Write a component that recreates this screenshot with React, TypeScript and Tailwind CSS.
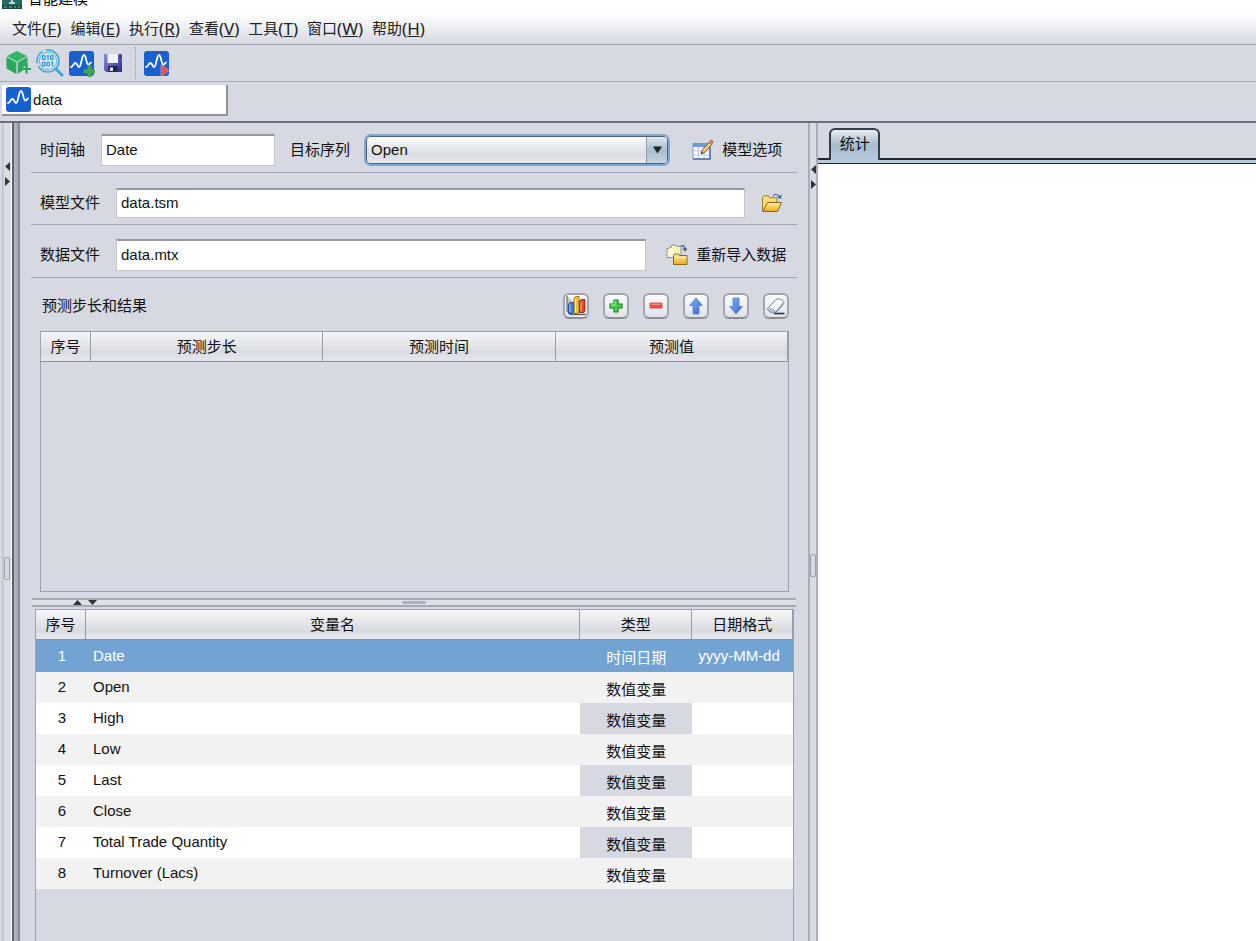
import { useState } from "react"

const menus = [
    { label: "文件", key: "F" },
    { label: "编辑", key: "E" },
    { label: "执行", key: "R" },
    { label: "查看", key: "V" },
    { label: "工具", key: "T" },
    { label: "窗口", key: "W" },
    { label: "帮助", key: "H" },
]

const variables = [
    { name: "Date", type: "时间日期", format: "yyyy-MM-dd" },
    { name: "Open", type: "数值变量", format: "" },
    { name: "High", type: "数值变量", format: "" },
    { name: "Low", type: "数值变量", format: "" },
    { name: "Last", type: "数值变量", format: "" },
    { name: "Close", type: "数值变量", format: "" },
    { name: "Total Trade Quantity", type: "数值变量", format: "" },
    { name: "Turnover (Lacs)", type: "数值变量", format: "" },
]

const Gradients = () => (
    <svg width="0" height="0" className="absolute" aria-hidden="true">
        <defs>
            <linearGradient id="folder" x1="0" y1="0" x2="0" y2="1">
                <stop offset="0" stopColor="#fff0a0" />
                <stop offset="1" stopColor="#eda820" />
            </linearGradient>
            <linearGradient id="blue" x1="0" y1="0" x2="1" y2="1">
                <stop offset="0" stopColor="#8fb4f5" />
                <stop offset="1" stopColor="#2d62d4" />
            </linearGradient>
            <linearGradient id="disk" x1="0" y1="0" x2="1" y2="1">
                <stop offset="0" stopColor="#8d8fe8" />
                <stop offset="1" stopColor="#2c2a86" />
            </linearGradient>
        </defs>
    </svg>
)

const AppIcon = () => (
    <svg width="20" height="22" viewBox="0 0 20 22">
        <rect width="20" height="22" fill="#236e63" />
        <rect y="18" width="20" height="4" fill="#174c46" />
        <path d="M10 8v8M7 16h6" stroke="#e8f5f2" strokeWidth="1.500" />
        <path d="M2 20h3M7 20h3M12 20h2M16 20h2" stroke="#8fbdb5" strokeWidth="1" />
    </svg>
)

const CubeIcon = () => (
    <svg width="26" height="26" viewBox="0 0 26 26">
        <path d="M11 1 21 6 11 11.500 1 6z" fill="#31b566" />
        <path d="M.5 7 10.300 12.500V24L.5 18.500z" fill="#29a65a" />
        <path d="M11.700 12.500 21.500 7v9.500h-4v3.500L11.700 24z" fill="#2cab5e" />
        <path d="M20.500 14.500v9M16 19h9" stroke="#2ba95c" strokeWidth="2.200" />
        <path d="M1 6.500 11 12 21.500 6.500M11 12v12" fill="none" stroke="#7fcfa0" strokeWidth=".8" />
    </svg>
)

const SearchDataIcon = () => (
    <svg width="28" height="28" viewBox="0 0 28 28">
        <circle cx="12" cy="12" r="11" fill="none" stroke="#38a7dc" strokeWidth="1.500" strokeDasharray="29 3 14 3" />
        <circle cx="12" cy="12" r="8.600" fill="#dbe6ef" stroke="#5db7e0" strokeWidth="1" />
        <path d="m20 20 6 6" stroke="#38a7dc" strokeWidth="3" strokeLinecap="round" />
        <g fill="none" stroke="#1f93cf" strokeWidth="1.200">
            <rect x="6.500" y="6.500" width="2.500" height="4" rx="1" />
            <path d="M11 7.200 12 6.500V11" />
            <rect x="14.500" y="6.500" width="2.500" height="4" rx="1" />
            <rect x="6.500" y="13" width="2.500" height="4" rx="1" />
            <rect x="11" y="13" width="2.500" height="4" rx="1" />
            <path d="M15.500 13.700 16.500 13v4.500" />
        </g>
    </svg>
)

const WaveIcon = ({ badge }: { badge?: "plus" | "play" }) => (
    <svg width="27" height="27" viewBox="0 0 27 27">
        <rect x="1" y="1" width="25" height="25" rx="3" fill="#1660d2" />
        <path
            d="M3 17c2 0 2.500-4 4.500-4 2 0 1.800 4 3.500 4C13.500 17 13.500 5 16 5c2.200 0 2.200 9.500 4.300 9.500 1.200 0 1.400-1.500 2.700-2"
            fill="none"
            stroke="#fff"
            strokeWidth="1.800"
            strokeLinecap="round"
        />
        {badge === "plus" && <path d="M19.500 15.500h4v4H27v3.500h-3.500V27h-4v-4h-4v-3.500h4z" fill="#43a84a" />}
        {badge === "play" && <path d="M18 14.500v12l8-6z" fill="#ee4b4b" stroke="#f7a0a0" strokeWidth=".6" />}
    </svg>
)

const SaveIcon = () => (
    <svg width="18" height="18" viewBox="0 0 18 18">
        <path d="M0 0h18v18H2l-2-2z" fill="url(#disk)" />
        <path d="M3.500 0h10.500v9H3.500z" fill="#f1f3fb" />
        <path d="M4.500 12h9v6h-9z" fill="#23234f" />
        <path d="M6 13.500h3V17H6z" fill="#e6e8f4" />
        <path d="M15.500 1.500h1.300V4h-1.300z" fill="#1c1b5c" />
    </svg>
)

const OptionsIcon = () => (
    <svg width="22" height="22" viewBox="0 0 22 22">
        <path d="M1 4.500h17V20H1z" fill="#fff" stroke="#6f94c8" />
        <path d="M1 4.500h17v3.500H1z" fill="#6f9ae2" />
        <path d="M1 12h17M1 16h17M6.500 8v12M12 8v12" stroke="#b4c9e8" />
        <path d="M18 8v12H1" fill="none" stroke="#496fae" strokeWidth="1.400" />
        <path d="m9 15 1.500-4.500L17.500 3l2.500 2.200-7 8z" fill="#f3cd6c" stroke="#6e5632" />
        <path d="m17 3.300 1.500-1.800c1-1 3.500 1 2.500 2.200L19.500 5.500z" fill="#e58265" stroke="#a65440" strokeWidth=".7" />
        <path d="m9 15 .7-2.200L11 14z" fill="#333" />
    </svg>
)

const OpenFolderIcon = () => (
    <svg width="22" height="20" viewBox="0 0 22 20">
        <path d="M1.500 18V4.500l1.300-1.800h4.500l1.500 2H16V18z" fill="#f3d981" stroke="#a17d28" />
        <path d="M2 18.500 6.500 9.500H20.500L16.500 18.500z" fill="url(#folder)" stroke="#8f6716" />
        <path d="M12 3c1.500-2.300 5-2.300 6.500 1" fill="none" stroke="#4f75a8" strokeWidth="1.400" />
        <path d="m20.500 1.500-.3 4.500-4-1.500z" fill="#3d659d" />
    </svg>
)

const ReimportIcon = () => (
    <svg width="22" height="22" viewBox="0 0 22 22">
        <path d="M1 13.500V4.500h2L4 3h4l1 1.500h4.500v9z" fill="#fff7d2" stroke="#83959f" />
        <path d="M5 4V2.500L6 1h4l1 1.500h4V12" fill="#fdf1bd" stroke="#83959f" />
        <path d="M15 2c2.500-1 4 .5 4 3" fill="none" stroke="#3f6698" strokeWidth="1.400" />
        <path d="m16.500 4.500 2.500 3 2.500-3z" fill="#34598d" />
        <path d="M7.500 20.500v-9l1-1.500h4l1 1.500h7.500v9z" fill="url(#folder)" stroke="#94661a" />
        <path d="M8 13.500h12.500" stroke="#fff3b0" />
    </svg>
)

const ChartIcon = () => (
    <svg width="22" height="22" viewBox="0 0 22 22">
        <path d="M2 1v15l3 3.500h16L18 16z" fill="#c4c6cc" />
        <path d="M2 1v15l3 3.500h16" fill="none" stroke="#57585e" />
        <path d="M3.500 9l1.500-1.500h4V17L7.500 18.500h-4z" fill="#3e7be4" stroke="#1b3f91" strokeWidth=".8" />
        <path d="M9 3l1.500-1.500h3.500V17l-1 1.500H9z" fill="#f0c040" stroke="#86600c" strokeWidth=".8" />
        <path d="M14.500 6 16 4.500h4V16l-1.500 1.500h-4z" fill="#e04a2c" stroke="#871d0d" strokeWidth=".8" />
        <path d="M5 9.500v7.500M10.500 4v13M16 7v9" stroke="#fff" strokeOpacity=".6" />
    </svg>
)

const PlusIcon = () => (
    <svg width="14" height="14" viewBox="0 0 14 14">
        <path d="M5 1h4v4h4v4H9v4H5V9H1V5h4z" fill="#4cd04c" stroke="#168a22" strokeWidth="1.200" />
        <path d="M6 2v4H2" fill="none" stroke="#a8f0a0" />
    </svg>
)

const MinusIcon = () => (
    <svg width="14" height="14" viewBox="0 0 14 14">
        <path d="M1 4h12v5H1z" fill="#ee5049" stroke="#c93a35" strokeWidth=".8" />
        <path d="M2 5.200h10" stroke="#f9a49c" />
    </svg>
)

const ArrowIcon = ({ down = false }: { down?: boolean }) => (
    <svg width="16" height="18" viewBox="0 0 16 18">
        <path
            d={down ? "M8 17 1.500 9.500H5V1h6v8.500h3.500z" : "M8 1 14.500 8.500H11V17H5V8.500H1.500z"}
            fill="url(#blue)"
            stroke="#5c82cc"
            strokeWidth=".8"
        />
    </svg>
)

const EraserIcon = () => (
    <svg width="20" height="18" viewBox="0 0 20 18">
        <path d="M8 16.500h10.500" stroke="#333" strokeWidth="1.600" />
        <path d="M1.500 11.500 10 2.500C11.500 1 18 2.500 18 5.500L10 15c-2 2-8.500 0-8.500-3.500z" fill="#f7f9fc" stroke="#6e7f98" />
        <path d="M2.500 12c1-1.500 7 0 6.500 3-2 1-6.500-.5-6.500-3z" fill="#b9c8de" stroke="#8798b2" strokeWidth=".7" />
        <path d="M17.500 6.500 10 15" stroke="#7f93b3" strokeWidth="1.600" />
    </svg>
)

const smallButtons = [
    { label: "图表", icon: <ChartIcon /> },
    { label: "添加", icon: <PlusIcon /> },
    { label: "删除", icon: <MinusIcon /> },
    { label: "上移", icon: <ArrowIcon /> },
    { label: "下移", icon: <ArrowIcon down /> },
    { label: "清除", icon: <EraserIcon /> },
]

const inputClass =
    "min-w-0 border border-[#c4c6cb] border-t-2 border-t-[#96989d] bg-white px-1 pb-[2px] text-[15px] outline-none"
const headCell =
    "h-[30px] border-r border-b border-r-[#9a9da6] border-b-[#8d9098] bg-linear-to-b from-[#f5f6f8] via-[#d9dbe1] via-70% to-[#e6e8f0] p-0 text-center font-normal"

const SplitArrows = () => (
    <svg width="7" height="26" viewBox="0 0 7 26">
        <path d="M6 1v9L1 5.500z" fill="#333" />
        <path d="M1 16v9l5-4.500z" fill="#333" />
    </svg>
)

// vertical divider handle with collapse arrows and grip
const Splitter = () => (
    <div className="flex w-full flex-col items-center border-x-2 border-[#a9adb8] bg-[#d9dce3] pt-[41px]">
        <SplitArrows />
        <div className="mt-[364px] h-[23px] w-[6px] rounded-xs border border-[#9da1ad] bg-[#d6d9e1]" />
    </div>
)

const FilesForm = () => {
    const [target, setTarget] = useState("Open")

    return (
        <div className="mx-[11px]">
            <div className="flex h-[50px] items-center border-b border-[#a2a6b0] pt-1 pr-[15px] pl-[9px]">
                <label htmlFor="axis">时间轴</label>
                <input id="axis" defaultValue="Date" className={inputClass + " ml-4 h-8 w-[174px]"} />
                <label htmlFor="target" className="ml-[15px]">目标序列</label>
                <div className="relative ml-4 h-7 min-w-0 flex-1 rounded-[5px] border border-[#55606e] ring-2 ring-[#79a9d8]">
                    <select
                        id="target"
                        value={target}
                        onChange={(e) => setTarget(e.target.value)}
                        className="h-full w-full appearance-none rounded-sm bg-linear-to-b from-[#fafbfc] via-[#d9dce2] via-70% to-[#e8ebf1] px-1 text-[15px] outline-none"
                    >
                        {variables.slice(1).map((v) => (
                            <option key={v.name}>{v.name}</option>
                        ))}
                    </select>
                    <span className="pointer-events-none absolute inset-y-0 right-0 flex w-[21px] items-center justify-center rounded-r-sm border-l border-[#8ba0b4] bg-linear-to-b from-[#dfe8f0] via-[#a6bccf] to-[#c2d5e5]">
                        <svg width="9" height="8" viewBox="0 0 10 8"><path d="M0 0h10L5 8z" fill="#222" /></svg>
                    </span>
                </div>
                <button className="ml-6 flex items-center gap-2">
                    <OptionsIcon />
                    模型选项
                </button>
            </div>
            <div className="flex h-[52px] items-center border-b border-[#a2a6b0] pt-2 pr-[14px] pl-[9px]">
                <label htmlFor="model">模型文件</label>
                <input id="model" defaultValue="data.tsm" className={inputClass + " ml-4 h-[30px] flex-1"} />
                <button aria-label="打开" className="ml-4"><OpenFolderIcon /></button>
            </div>
            <div className="flex h-[53px] items-center border-b border-[#a2a6b0] pt-2 pr-[11px] pl-[9px]">
                <label htmlFor="datafile">数据文件</label>
                <input id="datafile" defaultValue="data.mtx" className={inputClass + " ml-4 h-8 flex-1"} />
                <button className="ml-5 flex items-center gap-2">
                    <ReimportIcon />
                    重新导入数据
                </button>
            </div>
        </div>
    )
}

const ForecastPane = () => (
    <div className="mr-[19px] ml-5">
        <div className="flex h-[53px] items-center justify-between pt-[2px]">
            <span className="pl-[2px]">预测步长和结果</span>
            <div className="flex gap-[14px]">
                {smallButtons.map((b) => (
                    <button
                        key={b.label}
                        aria-label={b.label}
                        className="flex size-[26px] items-center justify-center rounded-md border-2 border-[#a3a6ad] border-b-[#8b8e96] bg-linear-to-b from-[#fafbfc] to-[#dfe2e8]"
                    >
                        {b.icon}
                    </button>
                ))}
            </div>
        </div>
        <div className="h-[261px] border border-[#9da1ac]">
            <table className="w-full table-fixed border-separate border-spacing-0">
                <thead>
                    <tr>
                        <th className={headCell + " w-[50px]"}>序号</th>
                        <th className={headCell}>预测步长</th>
                        <th className={headCell}>预测时间</th>
                        <th className={headCell}>预测值</th>
                    </tr>
                </thead>
            </table>
        </div>
    </div>
)

const VariableTable = () => (
    <div className="mt-[2px] mr-[14px] ml-[15px] flex-1 border border-b-0 border-[#9da1ac]">
        <table className="w-full table-fixed border-separate border-spacing-0">
            <thead>
                <tr>
                    <th className={headCell + " w-[50px]"}>序号</th>
                    <th className={headCell}>变量名</th>
                    <th className={headCell + " w-[112px]"}>类型</th>
                    <th className={headCell + " w-[101px]"}>日期格式</th>
                </tr>
            </thead>
            <tbody>
                {variables.map((v, i) => {
                    const selected = i === 0
                    const striped = i % 2 === 1
                    return (
                        <tr
                            key={v.name}
                            className={
                                selected
                                    ? "h-8 bg-[#73a3d2] text-white"
                                    : striped
                                      ? "h-[31px] bg-[#f2f2f2]"
                                      : "h-[31px] bg-white"
                            }
                        >
                            <td className="p-0 pb-px pl-[2px] text-center">{i + 1}</td>
                            <td className="p-0 pb-px pl-[7px]">{v.name}</td>
                            <td className={"p-0 pt-1 text-center " + (selected || striped ? "" : "bg-[#d6d9e1]")}>{v.type}</td>
                            <td className="p-0 pb-px pl-[6px]">{v.format}</td>
                        </tr>
                    )
                })}
            </tbody>
        </table>
    </div>
)

export default function App() {
    return (
        <div className="flex h-screen flex-col overflow-hidden bg-[#d6d9e1] font-['Liberation_Sans','Noto_Sans_CJK_SC',sans-serif] text-[15px] leading-5 text-[#111]">
            <Gradients />
            <header className="flex h-[14px] shrink-0 items-end gap-[6px] overflow-hidden bg-white pb-[5px] pl-[2px]">
                <AppIcon />
                <span className="text-black">智能建模</span>
            </header>
            <nav className="flex h-[31px] shrink-0 items-center gap-[9px] border-b border-[#a0a3ad] bg-linear-to-b from-white to-[#d6d9e1] pl-3">
                {menus.map((m) => (
                    <button key={m.key} className="flex items-center text-[#222]">
                        {m.label}
                        <span className="font-['Noto_Sans',sans-serif] text-[17px] leading-5">
                            (<u className="decoration-1">{m.key}</u>)
                        </span>
                    </button>
                ))}
            </nav>
            <div className="flex h-[37px] shrink-0 items-center border-b border-[#a9adb6] pl-[6px]">
                <button aria-label="新建"><CubeIcon /></button>
                <button aria-label="查找数据" className="ml-1"><SearchDataIcon /></button>
                <button aria-label="新建模型" className="ml-1"><WaveIcon badge="plus" /></button>
                <button aria-label="保存" className="ml-[9px]"><SaveIcon /></button>
                <div className="ml-[13px] h-8 border-l border-dotted border-[#9599a3]" />
                <button aria-label="运行" className="ml-[7px]"><WaveIcon badge="play" /></button>
            </div>
            <div className="flex h-[41px] shrink-0 items-center border-b-2 border-[#6b6f79] px-[2px] pb-[2px]">
                <button className="flex h-[31px] w-[226px] items-center border-r-2 border-b-2 border-[#909298] bg-white pl-[3px]">
                    <WaveIcon />
                    <span className="pl-px">data</span>
                </button>
            </div>
            <main className="grid min-h-0 flex-1 grid-cols-[20px_minmax(0,9fr)_10px_minmax(0,5fr)]">
                <div className="flex">
                    <div className="flex w-3 flex-col items-center border-r border-white bg-linear-to-r from-[#d6d9e1] from-20% via-[#a9adb8] via-25% to-[#d9dce3] to-35% pt-[38px] pl-[3px]">
                        <SplitArrows />
                        <div className="mt-[370px] h-[23px] w-[6px] rounded-xs border border-[#9da1ad] bg-[#d6d9e1]" />
                    </div>
                    <div className="flex-1 border-r-2 border-l-2 border-r-[#858c99] border-l-[#5d6069] bg-linear-to-r from-[#b4b8c2] to-[#9ea5b2]" />
                </div>
                <section className="flex min-h-0 flex-col">
                    <FilesForm />
                    <ForecastPane />
                    <div className="mx-3 mt-[6px] grid h-[9px] shrink-0 grid-cols-[1fr_auto_1fr] items-center border-y-2 border-[#a4a8b2] bg-[#dde0e6]">
                        <svg width="24" height="5" viewBox="0 0 24 5" className="ml-[41px]">
                            <path d="M0 5h9L4.500 0z" fill="#333" />
                            <path d="M15 0h9l-4.500 5z" fill="#333" />
                        </svg>
                        <div className="h-[3px] w-6 rounded-xs bg-[#adb1bd]" />
                    </div>
                    <VariableTable />
                </section>
                <Splitter />
                <section className="flex min-h-0 flex-col bg-white">
                    <div className="flex h-[37px] shrink-0 items-end border-b-2 border-[#202838] bg-[#d6d9e1] pl-[11px]">
                        <button className="-mb-[2px] h-8 w-[51px] rounded-t-md border-2 border-b-0 border-[#333d4d] bg-linear-to-b from-[#e6ebf0] via-[#a9bccd] to-[#b5cadb] pb-[2px]">
                            统计
                        </button>
                    </div>
                    <div className="h-1 shrink-0 border-b border-[#202838] bg-[#b5cadb]" />
                </section>
            </main>
        </div>
    )
}
